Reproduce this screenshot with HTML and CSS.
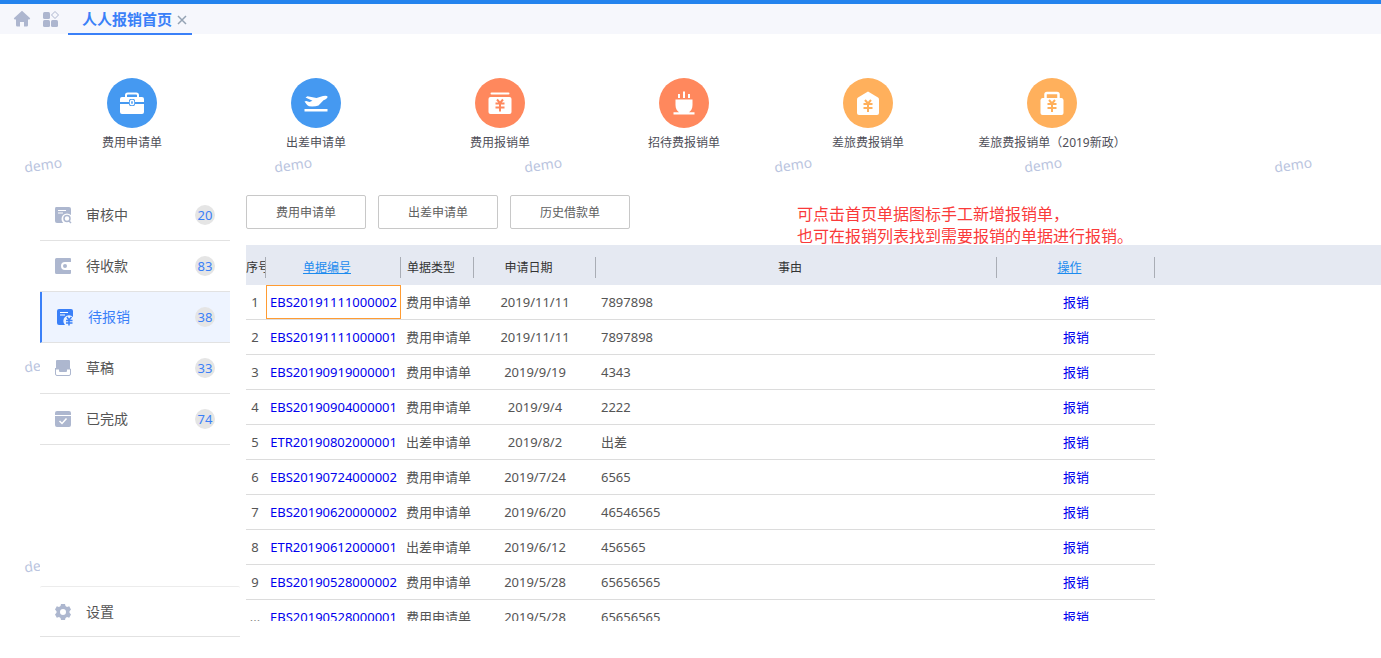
FILE: index.html
```html
<!DOCTYPE html>
<html lang="zh-CN">
<head>
<meta charset="utf-8">
<title>人人报销首页</title>
<link rel="stylesheet" href="styles.css">
</head>
<body>
<header class="topbar">
  <button class="icon-btn" type="button" aria-label="首页">
    <svg width="18" height="18" viewBox="0 0 18 18"><path fill="currentColor" d="M9 0.8 17.2 8.2 16.4 9.6H15V15.2a1.3 1.3 0 0 1-1.3 1.3H11V12H7v4.500H4.300A1.300 1.300 0 0 1 3 15.200V9.600H1.600L0.800 8.200Z"/></svg>
  </button>
  <button class="icon-btn" type="button" aria-label="应用">
    <svg width="18" height="18" viewBox="0 0 18 18"><g fill="currentColor"><rect x="1" y="2" width="7" height="7" rx="1.500"/><rect x="1" y="10" width="7" height="7" rx="1.500"/><rect x="9" y="10" width="7" height="7" rx="1.500"/></g><path d="M13 1.500 16.500 5 13 8.500 9.500 5Z" fill="none" stroke="currentColor"/></svg>
  </button>
  <div class="tab">
    <a class="tab-name" href="#">人人报销首页</a>
    <button class="tab-close" type="button" aria-label="关闭"><svg width="10" height="10" viewBox="0 0 10 10"><path d="M1 1 9 9M9 1 1 9" stroke="currentColor" stroke-width="1.500"/></svg></button>
  </div>
</header>

<div class="page">
  <div class="marks" aria-hidden="true">
    <span>demo</span><span>demo</span><span>demo</span><span>demo</span><span>demo</span><span>demo</span>
    <span class="first">demo</span><span class="first">demo</span>
  </div>

  <nav class="shortcuts">
    <a class="shortcut blue" href="#">
      <span class="disc"><svg width="50" height="50" viewBox="0 0 50 50"><path d="M19 20V17.300Q19 15.500 20.800 15.500H29.200Q31 15.500 31 17.300V20" fill="none" stroke="#fff" stroke-width="2"/><path fill="#fff" d="M15 19H35Q37 19 37 21V24H28V22.500Q28 21 26.500 21H23.500Q22 21 22 22.500V24H13V21Q13 19 15 19ZM13 26H22Q22 28 23.500 28H26.500Q28 28 28 26H37V34Q37 36 35 36H15Q13 36 13 34Z"/><rect x="23.500" y="22.500" width="3" height="4" rx="1" fill="none" stroke="#fff" stroke-width="1.500"/></svg></span>
      <span>费用申请单</span></a>
    <a class="shortcut blue" href="#">
      <span class="disc"><svg width="50" height="50" viewBox="0 0 50 50"><path fill="#fff" d="M13.500 23.500 15.300 23 18.500 24 21.500 22.800 14.500 19.500 16.500 18.300 25.500 20 32 18Q36 17.300 36.500 18.500C37 20 35 21.300 32.500 22.300L27.500 27.500Q24 28.800 18 28.300Q16 27.500 13.500 23.500Z"/><rect x="13.500" y="31" width="23" height="2.500" fill="#fff"/></svg></span>
      <span>出差申请单</span></a>
    <a class="shortcut coral" href="#">
      <span class="disc"><svg width="50" height="50" viewBox="0 0 50 50"><rect x="15.500" y="14.500" width="19" height="2" rx="1" fill="#fff"/><rect x="13.500" y="19" width="23" height="17" rx="2" fill="#fff"/><path d="M22 21.500 25 25 28 21.500M25 25V33.500M20.500 25.500H29.500M20.500 29.500H29.500" fill="none" stroke="currentColor" stroke-width="2"/></svg></span>
      <span>费用报销单</span></a>
    <a class="shortcut coral" href="#">
      <span class="disc"><svg width="50" height="50" viewBox="0 0 50 50"><path d="M20 16V20M25 13.500V20M30 16V20" stroke="#fff" stroke-width="2"/><path fill="#fff" d="M16.500 21.500H33.500V27C33.500 30.500 32 33 30 34.200H35.500V36.500H14.500V34.200H20C18 33 16.500 30.500 16.500 27Z"/></svg></span>
      <span>招待费报销单</span></a>
    <a class="shortcut amber" href="#">
      <span class="disc"><svg width="50" height="50" viewBox="0 0 50 50"><path fill="#fff" d="M25 13.500 35 19.500Q36 20.200 36 21.500V35Q36 37 34 37H16Q14 37 14 35V21.500Q14 20.200 15 19.500Z"/><path d="M22 22 25 25.500 28 22M25 25.500V34M20.500 26H29.500M20.500 30H29.500" fill="none" stroke="currentColor" stroke-width="2"/></svg></span>
      <span>差旅费报销单</span></a>
    <a class="shortcut amber" href="#">
      <span class="disc"><svg width="50" height="50" viewBox="0 0 50 50"><path d="M18.500 21V16.500Q18.500 15 20 15H30Q31.500 15 31.500 16.500V21" fill="none" stroke="#fff" stroke-width="2.500"/><path fill="#fff" d="M15.500 20H34.500Q36 20 36.500 22V35Q36.500 37 34.500 37H15.500Q13.500 37 13.500 35V22Q14 20 15.500 20Z"/><path d="M22 22 25 25.500 28 22M25 25.500V34M20.500 26H29.500M20.500 30H29.500" fill="none" stroke="currentColor" stroke-width="2"/></svg></span>
      <span>差旅费报销单（2019新政）</span></a>
  </nav>

  <div class="work">
    <aside class="side">
      <a class="side-item" href="#"><svg width="18" height="18" viewBox="0 0 18 18"><path fill="currentColor" d="M2 1H15Q17 1 17 3V17H3Q1 17 1 15V3Q1 1 2 1Z"/><path d="M4 4.500H12M4 7H9" stroke="#fff"/><circle cx="13" cy="13" r="5.500" fill="#fff"/><circle cx="13" cy="12.500" r="3" fill="none" stroke="currentColor" stroke-width="1.500"/><path d="M15 15 17 17" stroke="currentColor" stroke-width="1.500"/></svg><span>审核中</span><b class="count">20</b></a>
      <a class="side-item" href="#"><svg width="18" height="18" viewBox="0 0 18 18"><path fill="currentColor" d="M2.500 1H16Q17 1 17 2V5H11A4 4 0 0 0 11 13H17V16Q17 17 16 17H2.500Q1 17 1 15.500V2.500Q1 1 2.500 1Z"/><circle cx="11" cy="9" r="2" fill="currentColor"/></svg><span>待收款</span><b class="count">83</b></a>
      <a class="side-item active" href="#"><svg width="18" height="18" viewBox="0 0 18 18"><path fill="currentColor" d="M3 1H15Q17 1 17 3V9A5.300 5.300 0 0 0 9 17H3Q1 17 1 15V3Q1 1 3 1Z"/><path d="M4 4.500H12M4 7H9" stroke="#fff"/><path d="M11 9 13 12 15.500 9M13 12V17.500M10 12.500H16.500M10 15H16.500" fill="none" stroke="currentColor" stroke-width="1.500"/></svg><span>待报销</span><b class="count">38</b></a>
      <a class="side-item" href="#"><svg width="18" height="18" viewBox="0 0 18 18"><path fill="currentColor" d="M3 1H15Q16 1 16 2V10H12V12H6V10H2V2Q2 1 3 1Z"/><path d="M1.500 9V15Q1.500 16.500 3 16.500H15Q16.500 16.500 16.500 15V10H12.500V12.500H5.500V10H1.500" fill="none" stroke="currentColor"/></svg><span>草稿</span><b class="count">33</b></a>
      <a class="side-item" href="#"><svg width="18" height="18" viewBox="0 0 18 18"><path fill="currentColor" d="M3 1H15Q17 1 17 3V5H1V3Q1 1 3 1ZM1 6H17V15Q17 17 15 17H3Q1 17 1 15Z"/><path d="M5.500 11 8 13.500 12.500 8.500" fill="none" stroke="#fff" stroke-width="1.500"/></svg><span>已完成</span><b class="count">74</b></a>
      <a class="side-item settings" href="#"><svg width="18" height="18" viewBox="0 0 18 18"><path fill="currentColor" fill-rule="evenodd" d="M7 1H11L11.500 3 13 4 15.200 3.300 17 6.600 15.500 8.200V9.800L17 11.400 15.200 14.700 13 14 11.500 15 11 17H7L6.500 15 5 14 2.800 14.700 1 11.400 2.500 9.800V8.200L1 6.600 2.800 3.300 5 4 6.500 3ZM9 6A3 3 0 1 0 9 12 3 3 0 0 0 9 6Z"/></svg><span>设置</span></a>
    </aside>

    <main class="main">
      <div class="tools">
        <button type="button">费用申请单</button>
        <button type="button">出差申请单</button>
        <button type="button">历史借款单</button>
        <p class="note">可点击首页单据图标手工新增报销单，<br>也可在报销列表找到需要报销的单据进行报销。</p>
      </div>
      <div class="list">
        <table>
          <colgroup><col class="c-no"><col class="c-code"><col class="c-type"><col class="c-date"><col class="c-reason"><col class="c-act"><col></colgroup>
          <thead><tr>
            <th class="no"><span>序号</span></th><th><span><a href="#">单据编号</a></span></th><th><span>单据类型</span></th><th><span>申请日期</span></th><th><span>事由</span></th><th><span><a href="#">操作</a></span></th><th></th>
          </tr></thead>
          <tbody>
            <tr><td>1</td><td class="picked"><a href="#">EBS20191111000002</a></td><td>费用申请单</td><td>2019/11/11</td><td>7897898</td><td><a href="#">报销</a></td><td></td></tr>
            <tr><td>2</td><td><a href="#">EBS20191111000001</a></td><td>费用申请单</td><td>2019/11/11</td><td>7897898</td><td><a href="#">报销</a></td><td></td></tr>
            <tr><td>3</td><td><a href="#">EBS20190919000001</a></td><td>费用申请单</td><td>2019/9/19</td><td>4343</td><td><a href="#">报销</a></td><td></td></tr>
            <tr><td>4</td><td><a href="#">EBS20190904000001</a></td><td>费用申请单</td><td>2019/9/4</td><td>2222</td><td><a href="#">报销</a></td><td></td></tr>
            <tr><td>5</td><td><a href="#">ETR20190802000001</a></td><td>出差申请单</td><td>2019/8/2</td><td>出差</td><td><a href="#">报销</a></td><td></td></tr>
            <tr><td>6</td><td><a href="#">EBS20190724000002</a></td><td>费用申请单</td><td>2019/7/24</td><td>6565</td><td><a href="#">报销</a></td><td></td></tr>
            <tr><td>7</td><td><a href="#">EBS20190620000002</a></td><td>费用申请单</td><td>2019/6/20</td><td>46546565</td><td><a href="#">报销</a></td><td></td></tr>
            <tr><td>8</td><td><a href="#">ETR20190612000001</a></td><td>出差申请单</td><td>2019/6/12</td><td>456565</td><td><a href="#">报销</a></td><td></td></tr>
            <tr><td>9</td><td><a href="#">EBS20190528000002</a></td><td>费用申请单</td><td>2019/5/28</td><td>65656565</td><td><a href="#">报销</a></td><td></td></tr>
            <tr><td>...</td><td><a href="#">EBS20190528000001</a></td><td>费用申请单</td><td>2019/5/28</td><td>65656565</td><td><a href="#">报销</a></td><td></td></tr>
          </tbody>
        </table>
      </div>
    </main>
  </div>
</div>
</body>
</html>
```
FILE: styles.css
```css
* { box-sizing: border-box; }
body {
  margin: 0;
  height: 100vh;
  display: flex;
  flex-direction: column;
  overflow: hidden;
  background: #fff;
  color: #555;
  font: 13px/20px "Noto Sans", "Noto Sans CJK SC", sans-serif;
}
a { color: inherit; text-decoration: none; }
button { font: inherit; cursor: pointer; }
svg { display: block; }

.topbar {
  display: flex;
  flex: none;
  height: 34px;
  padding-left: 13px;
  border-top: 4px solid #2383ee;
  background: #f6f7fc;
}
.icon-btn, .tab-close { padding: 0; border: 0; background: none; color: #adb6cf; }
.icon-btn { width: 18px; margin-right: 11px; }
.icon-btn + .icon-btn { margin-right: 8px; }
.tab {
  display: flex;
  align-items: center;
  gap: 5px;
  height: 31px;
  padding: 0 5px 0 14px;
  border-bottom: 2px solid #3a80f8;
}
.tab-name { color: #3a80f8; font-size: 15px; font-weight: 700; }
.tab-close { color: #94a3b3; padding-top: 3px; }

.page { position: relative; flex: 1; min-height: 0; display: flex; flex-direction: column; }
.marks {
  position: absolute;
  inset: 121px 0 0 24px;
  display: grid;
  grid-template-columns: repeat(6, 250px);
  grid-auto-rows: 200px;
  overflow: hidden;
  color: #bac5e0;
  font-size: 14px;
}
.marks span { justify-self: start; align-self: start; transform: rotate(-8deg); }
.marks .first { grid-column: 1; }

.shortcuts {
  display: grid;
  grid-template-columns: repeat(6, 1fr);
  margin: 44px 237px 0 40px;
  height: 112px;
}
.shortcut {
  position: relative;
  display: flex;
  flex-direction: column;
  align-items: center;
  align-self: start;
  gap: 5px;
  color: #4f4f59;
  font-size: 12px;
  white-space: nowrap;
}
.disc { border-radius: 50%; }
.blue .disc { background: #4599f1; }
.coral .disc { background: #ff885d; color: #ff885d; }
.amber .disc { background: #ffb05c; color: #ffb05c; }

.work { position: relative; display: flex; flex: 1; min-height: 0; }
.side {
  display: flex;
  flex-direction: column;
  width: 200px;
  margin-left: 40px;
  padding-bottom: 21px;
  background: #fff;
}
.side-item {
  display: flex;
  align-items: center;
  height: 51px;
  width: 190px;
  padding: 0 15px 0 14px;
  border-bottom: 1px solid #e2e2e2;
  font-size: 14px;
}
.side-item svg { color: #adb7cf; margin-right: 14px; }
.side-item.active { border-left: 2px solid #3a80f8; background: #eef4ff; color: #3a80f8; }
.side-item.active svg { color: #3a80f8; }
.settings { width: 200px; margin-top: auto; border-top: 1px solid #ececec; border-radius: 2px 2px 0 0; }
.count {
  width: 20px;
  margin-left: auto;
  border-radius: 50%;
  background: #e5e5e5;
  color: #3a80f8;
  font-size: 13px;
  font-weight: 400;
  text-align: center;
}

.main { position: relative; flex: 1; min-width: 0; display: flex; flex-direction: column; padding: 5px 0 37px 6px; background: #fff; }
.tools { position: relative; z-index: 1; display: flex; gap: 12px; flex: none; height: 50px; }
.tools button {
  width: 120px;
  height: 34px;
  padding: 2px 0 0;
  border: 1px solid #c8c8c8;
  border-radius: 2px;
  background: #fff;
  color: #606060;
  font-size: 12px;
}
.note {
  position: absolute;
  left: 551px;
  top: 8px;
  margin: 0;
  color: #fa3a3a;
  font-size: 16px;
  line-height: 22px;
  white-space: nowrap;
}

.list { flex: 1; min-height: 0; overflow: hidden; }
table { width: 100%; table-layout: fixed; border-collapse: separate; border-spacing: 0; }
.c-no { width: 20px; }
.c-code { width: 135px; }
.c-type { width: 73px; }
.c-date { width: 122px; }
.c-reason { width: 401px; }
.c-act { width: 158px; }
th { height: 40px; padding: 4px 0 0; background: #e5e9f2; color: #333; font-size: 12px; font-weight: 400; }
th span { display: block; height: 21px; padding-right: 12px; border-right: 1px solid #a9adb5; line-height: 22px; white-space: nowrap; overflow: hidden; }
th.no span { padding: 0; text-align: left; }
th a { color: #1c8bef; text-decoration: underline; }
td { height: 35px; padding: 0; border-bottom: 1px solid #dcdcdc; text-align: center; white-space: nowrap; }
td:first-child { padding-right: 2px; }
td:nth-child(3), td:nth-child(5) { padding-left: 5px; text-align: left; }
td:last-child { border-bottom: 0; }
td a { color: #00e; }
td.picked { box-shadow: inset 0 0 0 1px #ff9c33; }
```
